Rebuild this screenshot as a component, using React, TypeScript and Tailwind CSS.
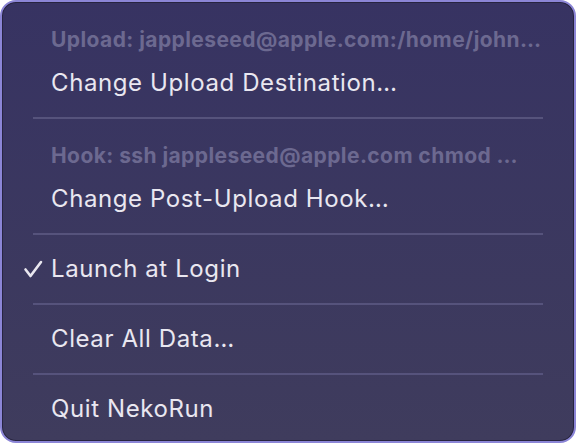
const Check = () => (
  <svg width="20" height="18" viewBox="0 0 20 18" className="absolute left-[21px] top-1/2 -translate-y-1/2">
    <path d="M2.5 9.5 L7.5 16 L18 2" fill="none" stroke="#e9e7ef" strokeWidth="2.6" strokeLinecap="round" strokeLinejoin="round" />
  </svg>
);

const Header: React.FC<{ text: string }> = ({ text }) => (
  <div className="h-[46px] flex items-center pl-[49px] pr-[30px] pt-[2px] text-[21px] font-bold tracking-[0.02em] text-[#6c6990] whitespace-nowrap">
    {text}
  </div>
);

const Item: React.FC<{ text: string; checked?: boolean }> = ({ text, checked }) => (
  <div className="relative h-[42px] flex items-center pl-[49px] text-[24px] tracking-[0.025em] text-[#e9e7f0] whitespace-nowrap">
    {checked && <Check />}
    {text}
  </div>
);

const Separator = () => (
  <div className="h-[28px] flex items-center px-[31px]">
    <div className="h-[2px] w-full bg-[#56537c]" />
  </div>
);

export default function App() {
  return (
    <div
      className="w-[576px] h-[443px] rounded-[16px] border-2 border-[#8b85d6] bg-gradient-to-b from-[#373362] to-[#3f3c5d] shadow-[inset_0_0_0_1px_#27243f] pt-[14px] overflow-hidden"
      style={{ fontFamily: "Inter, 'Noto Sans', sans-serif" }}
    >
      <Header text="Upload: jappleseed@apple.com:/home/john…" />
      <Item text="Change Upload Destination…" />
      <Separator />
      <Header text="Hook: ssh jappleseed@apple.com chmod …" />
      <Item text="Change Post-Upload Hook…" />
      <Separator />
      <Item text="Launch at Login" checked />
      <Separator />
      <Item text="Clear All Data…" />
      <Separator />
      <Item text="Quit NekoRun" />
    </div>
  );
}
